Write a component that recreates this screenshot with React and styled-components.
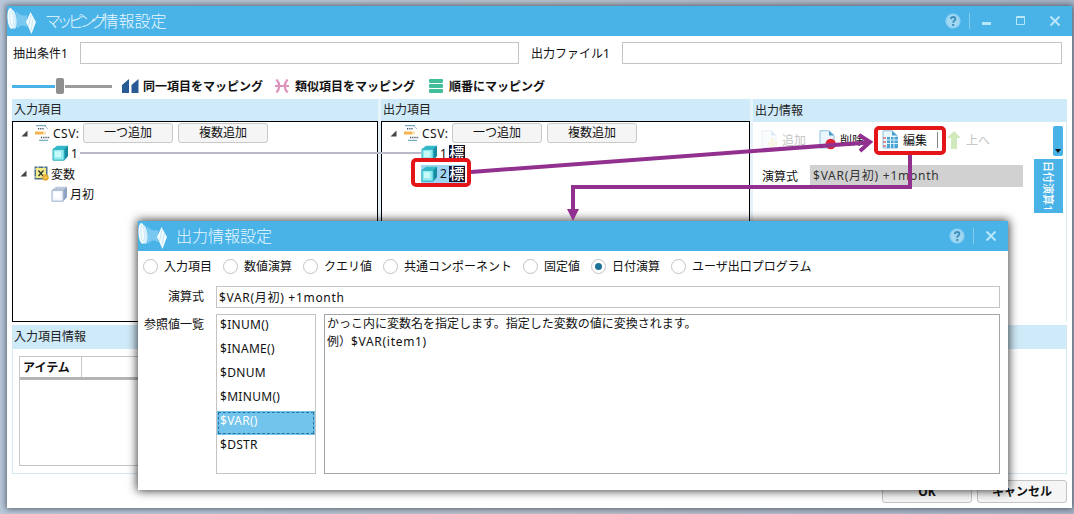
import { useState } from 'react';
import styled, { createGlobalStyle, css } from 'styled-components';

const GlobalStyle = createGlobalStyle`
  * {
    box-sizing: border-box;
  }

  body {
    margin: 0;
    overflow: hidden;
    font-family: 'Noto Sans', 'Noto Sans CJK JP', sans-serif;
    font-size: 12px;
    color: #111;
  }

  svg {
    display: block;
    flex: none;
  }
`;

const Desktop = styled.div`
  position: relative;
  width: 1074px;
  height: 514px;
  padding: 6px 2px 6px 7px;
  background: linear-gradient(90deg, #b9c9da, #bac2cc 50%, #a9b4c6);
`;

const Window = styled.div`
  display: flex;
  flex-direction: column;
  height: 502px;
  background: #fff;
  box-shadow: 0 0 6px 1px rgba(50, 60, 75, 0.75);
`;

const TitleBar = styled.header`
  display: flex;
  align-items: center;
  flex: none;
  height: 30px;
  color: #e8f8ff;
  background: #49b3e8;
`;

const Title = styled.h1`
  flex: 1;
  margin: 0 0 0 8px;
  font-size: 16px;
  font-weight: 300;
  line-height: 30px;
  white-space: nowrap;
`;

const WindowTools = styled.div`
  display: flex;
  align-items: center;
  gap: 8px;
  padding-right: 11px;
`;

const Text = styled.span`
  letter-spacing: ${({ $track }) => $track || 0}px;
  white-space: nowrap;
`;

const FieldRow = styled.div`
  display: grid;
  grid-template-columns: 67px 439px 103px 440px;
  align-items: center;
  height: 34px;
  padding-left: 6px;

  & > span:nth-child(3) {
    padding-left: 12px;
  }
`;

const Input = styled.input`
  width: 100%;
  height: 22px;
  padding: 0 2px;
  border: 1px solid #c4c4c4;
  background: #fff;
  font: inherit;
  letter-spacing: ${({ $track }) => $track || 0}px;
  color: inherit;
  outline: none;
`;

const ToolRow = styled.div`
  display: flex;
  align-items: center;
  height: 29px;
  padding: 3px 0 0 5px;
  font-weight: 700;
`;

const Slider = styled.div`
  display: flex;
  align-items: center;
  width: 100px;
  margin-right: 10px;
`;

const Track = styled.div`
  width: ${({ $width }) => $width}px;
  height: 3px;
  background: ${({ $on }) => ($on ? '#49b3e8' : '#9b9b9b')};
`;

const Thumb = styled.div`
  width: 8px;
  height: 16px;
  margin: 0 1px;
  border-radius: 2px;
  background: #8f8f8f;
`;

const MapButton = styled.div`
  display: flex;
  align-items: center;
  gap: ${({ $gap }) => $gap || 5}px;
  width: ${({ $width }) => $width}px;
  line-height: 17px;
`;

const Panels = styled.div`
  display: grid;
  grid-template-columns: 366px 369px 314px;
  gap: 3px;
  height: 223px;
  margin: 0 5px;
  background: #e6f3fa;
`;

const Panel = styled.section`
  display: flex;
  flex-direction: column;
  min-width: 0;
`;

const PanelTitle = styled.h2`
  flex: none;
  height: ${({ $height }) => $height || 22}px;
  margin: 0;
  padding-left: ${({ $left }) => $left ?? 2}px;
  font-size: 12px;
  font-weight: 400;
  line-height: ${({ $height }) => $height || 22}px;
  color: #222;
  background: #cfeaf8;
`;

const Tree = styled.div`
  flex: 1;
  padding-top: 1px;
  border: 1px solid #000;
  background: #fff;
`;

const TreeRow = styled.div`
  display: flex;
  align-items: center;
  height: 20.3px;
  padding-left: ${({ $indent }) => $indent}px;
`;

const NodeIcon = styled.div`
  margin-left: 7px;
`;

const TreeLabel = styled.span`
  width: ${({ $width }) => ($width ? `${$width}px` : 'auto')};
  margin-left: 2px;
  letter-spacing: ${({ $track }) => $track || 0}px;
  white-space: nowrap;
`;

const AddButton = styled.button`
  width: 90px;
  height: 20px;
  margin: 0 0 0 ${({ $left }) => $left}px;
  padding: 0;
  border: 1px solid #c9c9c9;
  border-radius: 3px;
  background: #f5f5f5;
  font: inherit;
  line-height: 16px;
  color: inherit;
`;

const Link = styled.div`
  flex: 1;
  height: 2px;
  margin-left: ${({ $left }) => $left || 0}px;
  background: #b9b9c9;
`;

const Selected = styled.div`
  display: flex;
  align-items: center;
  height: 18px;
  background: ${({ $on }) => ($on ? '#9fd5f3' : 'transparent')};
`;

const Badge = styled.span`
  width: 16px;
  height: 16px;
  margin-left: 2px;
  font-size: 15px;
  font-weight: 500;
  line-height: 15px;
  text-align: center;
  color: #fff;
  background: #12122a;
`;

const InfoBody = styled.div`
  display: grid;
  grid-template-columns: 1fr 33px;
  flex: 1;
  border-right: 1px solid #dcebf2;
  background: #fff;
`;

const InfoTools = styled.div`
  display: flex;
  align-items: center;
  height: 36px;
  padding-left: 8px;
`;

const InfoTool = styled.div`
  display: flex;
  align-items: center;
  gap: ${({ $gap }) => $gap || 4}px;
  width: ${({ $width }) => $width}px;
  padding-left: ${({ $left }) => $left || 0}px;
  white-space: nowrap;
  color: ${({ $off }) => ($off ? '#c6c6c6' : '#111')};
`;

const Separator = styled.i`
  width: 1px;
  height: ${({ $height }) => $height}px;
  margin-right: ${({ $right }) => $right || 0}px;
  background: ${({ $color }) => $color};
`;

const FormulaRow = styled.div`
  display: flex;
  align-items: center;
  height: 36px;
  padding-left: 9px;
`;

const FormulaValue = styled.div`
  width: 213px;
  height: 22px;
  margin-left: 12px;
  padding-left: 3px;
  letter-spacing: 0.75px;
  line-height: 21px;
  color: #333;
  background: #d1d1d1;
`;

const SideTabs = styled.div`
  display: flex;
  flex-direction: column;
  align-items: flex-end;
  gap: 3px;
  padding: 4px 3px 0 0;
`;

const TabScroll = styled.div`
  display: flex;
  align-items: flex-end;
  justify-content: center;
  width: 10px;
  height: 30px;
  padding-bottom: 3px;
  border-radius: 2px;
  background: #49b3e8;
`;

const SideTab = styled.div`
  width: 29px;
  height: 54px;
  padding-top: 2px;
  font-size: 11px;
  font-weight: 500;
  line-height: 29px;
  writing-mode: vertical-rl;
  text-orientation: sideways;
  white-space: nowrap;
  color: #fff;
  background: #49b3e8;
`;

const ItemInfo = styled.section`
  height: 149px;
  margin: 3px 5px 0;
  border: 1px solid #d4e8ef;
  border-top: 0;
`;

const ItemTable = styled.div`
  width: 700px;
  height: 110px;
  margin: 7px 0 0 6px;
  border: 1px solid #c6c6c6;
`;

const ItemHead = styled.div`
  display: flex;
  height: 23px;
  border-bottom: 3px solid #b4b4b4;
  font-weight: 700;
  line-height: 21px;

  & > span {
    width: 62px;
    padding-left: 3px;
    border-right: 1px solid #c6c6c6;
  }
`;

const Footer = styled.footer`
  display: flex;
  justify-content: flex-end;
  gap: 5px;
  padding: 6px 5px 0;
`;

const FooterButton = styled.button`
  width: 90px;
  height: 23px;
  padding: 0;
  border: 1px solid #c4c4c4;
  border-radius: 3px;
  background: #f5f5f5;
  font: inherit;
  font-weight: 700;
  line-height: 19px;
  color: #111;
`;

const Dialog = styled.div`
  position: absolute;
  left: 138px;
  top: 221px;
  width: 870px;
  height: 269px;
  background: #fff;
  box-shadow: 0 0 9px 1px rgba(0, 0, 0, 0.75);
`;

const RadioRow = styled.div`
  display: flex;
  align-items: center;
  height: 31px;
  padding-left: 5px;
`;

const RadioLabel = styled.label`
  display: flex;
  align-items: center;
  gap: 6px;
  width: ${({ $width }) => $width}px;
  white-space: nowrap;

  span {
    margin-top: -2px;
  }
`;

const Radio = styled.i`
  display: grid;
  place-items: center;
  width: 15px;
  height: 15px;
  border: 1px solid #c2c2c2;
  border-radius: 50%;

  ${({ $checked }) =>
    $checked &&
    css`
      &::after {
        content: '';
        width: 7px;
        height: 7px;
        border-radius: 50%;
        background: #1b7296;
      }
    `}
`;

const FormGrid = styled.div`
  display: grid;
  grid-template-columns: 66px 100px 676px;
  grid-template-rows: 22px 160px;
  gap: 6px 8px;
  padding: 4px 0 0 4px;
`;

const FormLabel = styled.span`
  padding: 2px 4px 0 0;
  line-height: 17px;
  text-align: right;
  white-space: nowrap;
`;

const FormulaField = styled.div`
  grid-column: 2 / 4;
`;

const ListBox = styled.ul`
  margin: 0;
  padding: 0;
  border: 1px solid #c4c4c4;
  list-style: none;
`;

const ListItem = styled.li`
  height: 24px;
  padding: 0 3px;
  letter-spacing: 0.3px;
  line-height: 20px;
  color: ${({ $selected }) => ($selected ? '#fff' : '#111')};
  background: ${({ $selected }) => ($selected ? '#72c4ec' : 'transparent')};
  outline: ${({ $selected }) => ($selected ? '1px dashed #2873a0' : 'none')};
  outline-offset: -2px;
`;

const Description = styled.div`
  padding: 0 2px;
  border: 1px solid #a5a5a5;
  line-height: 17.5px;
`;

const Overlay = styled.svg`
  position: absolute;
  left: 0;
  top: 0;
  pointer-events: none;
`;

const Logo = () => (
  <svg width="30" height="30" viewBox="0 0 30 30">
    <path d="M9 5 Q14 11 20 9 V21 Q14 17 10 23Z" fill="#79c8f0" />
    <ellipse cx="6.6" cy="13.5" rx="3" ry="9.5" fill="#cdebfa" transform="rotate(-6 6.6 13.5)" />
    <ellipse cx="4" cy="12.5" rx="3.5" ry="10.5" fill="#f4fcff" transform="rotate(-4 4 12.5)" />
    <ellipse cx="4.6" cy="12.5" rx="1.8" ry="8" fill="none" stroke="#b9e1f6" strokeWidth=".7" transform="rotate(-4 4.6 12.5)" />
    <path d="M23.5 6 L29 16 L24.5 28 L19 16Z" fill="#f0fbff" />
    <path d="M24 9 L21.5 20 M26.3 12 L24 24" stroke="#b4dff5" strokeWidth=".7" />
  </svg>
);

const HelpIcon = () => (
  <svg width="16" height="16" viewBox="0 0 16 16">
    <circle cx="8" cy="8" r="7.6" fill="#8fd0f2" />
    <circle cx="8" cy="8" r="6" fill="#a3d8f3" />
    <path d="M5.8 6.2 Q6 4 8.2 4 Q10.5 4.1 10.4 6 Q10.3 7.1 9 7.9 Q8.2 8.5 8.2 9.7" fill="none" stroke="#3f8fbb" strokeWidth="1.9" />
    <path d="M7.2 11h2v2h-2z" fill="#3f8fbb" />
  </svg>
);

const CloseIcon = () => (
  <svg width="12" height="12" viewBox="0 0 12 12">
    <path d="M1.5 1.5 L10.5 10.5 M10.5 1.5 L1.5 10.5" stroke="#b8e6fa" strokeWidth="2" />
  </svg>
);

const SizeIcons = () => (
  <svg width="63" height="16" viewBox="0 0 63 16">
    <path d="M4 9h9v3H4z" fill="#b8e6fa" />
    <path d="M38.5 3.5h8v8h-8z M38 4.5h9" fill="none" stroke="#b8e6fa" />
  </svg>
);

const SameIcon = () => (
  <svg width="17" height="14" viewBox="0 0 17 14">
    <path d="M0 14V6L7 0V14Z M9.5 14V6L16.5 0V14Z" fill="#285b93" />
  </svg>
);

const SimilarIcon = () => (
  <svg width="14" height="14" viewBox="0 0 14 14">
    <path d="M1.5 .5 Q7 7 1.5 13.5 M12.5 .5 Q7 7 12.5 13.5 M0 7H14" fill="none" stroke="#dd93bd" strokeWidth="2.2" />
  </svg>
);

const OrderIcon = () => (
  <svg width="14" height="14" viewBox="0 0 14 14">
    <g fill="#43be9b">
      <rect width="14" height="4" rx="1" />
      <rect y="5" width="14" height="4" rx="1" />
      <rect y="10" width="14" height="4" rx="1" />
    </g>
  </svg>
);

const Expander = () => (
  <svg width="7" height="7" viewBox="0 0 7 7">
    <path d="M6.5 .5V6.5H.5Z" fill="#444" />
  </svg>
);

const CsvIcon = () => (
  <svg width="16" height="16" viewBox="0 0 16 16">
    <path d="M1 .7H11 M4 15.3H13" stroke="#5797b6" />
    <path d="M3 3.8H9 M6 12.5H15" stroke="#3a4f5c" strokeWidth="1.5" strokeDasharray="1.2 1" />
    <path d="M0 6.5h8v3H0z" fill="#f2b551" />
    <path d="M8 6.5h3v3H8z" fill="#f9dfae" />
    <path d="M10 1l3 3" stroke="#9bbfd0" />
  </svg>
);

const Cube = ({ pale }) => (
  <svg width="17" height="16" viewBox="0 0 17 16">
    <path d="M1 4L5 .7H16V11L12.5 15H1Z" fill={pale ? '#bcc9df' : '#36b9c8'} />
    <path d="M12 4.5L16 .7V11L12.5 15Z" fill={pale ? '#8fa3c4' : '#168ba2'} />
    <path d="M1 4.2h11.2v11H1z" fill={pale ? '#f4f7fd' : '#8febee'} stroke={pale ? '#9baeca' : '#26a9bc'} />
    <path d="M3 6.2h6v6H3z" fill={pale ? '#fff' : '#c9fafa'} />
  </svg>
);

const VarIcon = () => (
  <svg width="15" height="15" viewBox="0 0 15 15">
    <path d="M.5 .5h13v13H.5z" fill="#4e7184" />
    <path d="M2 2h10v10H2z" fill="#f4eb88" />
    <path d="M4 0v2M10 0v2M0 3h2M0 11h2" stroke="#d4e8ef" />
    <path d="M4.5 4.5L9 10M9.5 4.5L4.5 10" stroke="#283c35" strokeWidth="1.3" />
    <circle cx="11.5" cy="11.5" r="3.2" fill="#e3ad2d" />
    <circle cx="11.5" cy="11.5" r="1" fill="#fbe28c" />
  </svg>
);

const PageIcon = ({ kind }) => (
  <svg width="17" height="20" viewBox="0 0 17 20" opacity={kind === 'add' ? 0.2 : 1}>
    <path d="M1 .8H10L15 5.5V18H1Z" fill="#eaf6fd" stroke="#8dbfdb" />
    <path d="M10 .8V5.5H15Z" fill="#4a9ccb" />
    {kind === 'add' && <path d="M10 8h3v4h4v3h-4v4h-3v-4H7v-3h3z" fill="#e8d97c" />}
    {kind === 'delete' && <circle cx="11.7" cy="14" r="5.2" fill="#dc2636" />}
    {kind === 'edit' && (
      <>
        <path d="M5 7h11v11H5z" fill="#4ba3d3" />
        <path d="M5 10h11M5 13.5h11M8.5 7v11M12 7v11" stroke="#d8f1fc" />
        <path d="M1 8h3M1 12h3M1 16h3" stroke="#d3707b" strokeWidth="1.5" />
      </>
    )}
  </svg>
);

const UpIcon = () => (
  <svg width="14" height="18" viewBox="0 0 14 18">
    <path d="M7 0L14 7H10V18H4V7H0Z" fill="#d2e9bd" />
  </svg>
);

const CsvRow = () => (
  <TreeRow $indent={8}>
    <Expander />
    <NodeIcon>
      <CsvIcon />
    </NodeIcon>
    <TreeLabel $track={0.5} $width={28}>
      CSV:
    </TreeLabel>
    <AddButton $left={2}>一つ追加</AddButton>
    <AddButton $left={5}>複数追加</AddButton>
  </TreeRow>
);

const RADIOS = [
  { label: '入力項目', width: 80 },
  { label: '数値演算', width: 80 },
  { label: 'クエリ値', width: 80 },
  { label: '共通コンポーネント', width: 140 },
  { label: '固定値', width: 68 },
  { label: '日付演算', width: 80 },
  { label: 'ユーザ出口プログラム', width: 160 },
];

const FUNCTIONS = ['$INUM()', '$INAME()', '$DNUM', '$MINUM()', '$VAR()', '$DSTR'];

const OutputDialog = () => {
  const [mode, setMode] = useState('日付演算');
  const [selected, setSelected] = useState('$VAR()');

  return (
    <Dialog>
      <TitleBar>
        <Logo />
        <Title>出力情報設定</Title>
        <WindowTools>
          <HelpIcon />
          <Separator $height={16} $right={3} $color="#85ccef" />
          <CloseIcon />
        </WindowTools>
      </TitleBar>
      <RadioRow>
        {RADIOS.map(({ label, width }) => (
          <RadioLabel key={label} $width={width} onClick={() => setMode(label)}>
            <Radio $checked={mode === label} />
            <Text>{label}</Text>
          </RadioLabel>
        ))}
      </RadioRow>
      <FormGrid>
        <FormLabel>演算式</FormLabel>
        <FormulaField>
          <Input $track={0.7} defaultValue="$VAR(月初) +1month" />
        </FormulaField>
        <FormLabel>参照値一覧</FormLabel>
        <ListBox>
          {FUNCTIONS.map((name) => (
            <ListItem key={name} $selected={name === selected} onClick={() => setSelected(name)}>
              {name}
            </ListItem>
          ))}
        </ListBox>
        <Description>
          <Text>かっこ内に変数名を指定します。指定した変数の値に変換されます。</Text>
          <br />
          <Text>例）</Text>
          <Text $track={0.7}>$VAR(item1)</Text>
        </Description>
      </FormGrid>
    </Dialog>
  );
};

const App = () => (
  <Desktop>
    <GlobalStyle />
    <Window>
      <TitleBar>
        <Logo />
        <Title>
          <Text $track={-4.5}>マッピング</Text>情報設定
        </Title>
        <WindowTools>
          <HelpIcon />
          <Separator $height={16} $color="#85ccef" />
          <SizeIcons />
          <CloseIcon />
        </WindowTools>
      </TitleBar>

      <FieldRow>
        <Text>抽出条件1</Text>
        <Input />
        <Text>出力ファイル1</Text>
        <Input />
      </FieldRow>

      <ToolRow>
        <Slider>
          <Track $on $width={43} />
          <Thumb />
          <Track $width={47} />
        </Slider>
        <MapButton $gap={4} $width={153}>
          <SameIcon />
          <Text>同一項目をマッピング</Text>
        </MapButton>
        <MapButton $gap={6} $width={154}>
          <SimilarIcon />
          <Text>類似項目をマッピング</Text>
        </MapButton>
        <MapButton $gap={6} $width={130}>
          <OrderIcon />
          <Text>順番にマッピング</Text>
        </MapButton>
      </ToolRow>

      <Panels>
        <Panel>
          <PanelTitle>入力項目</PanelTitle>
          <Tree>
            <CsvRow />
            <TreeRow $indent={39}>
              <Cube />
              <TreeLabel>1</TreeLabel>
              <Link $left={2} />
            </TreeRow>
            <TreeRow $indent={7}>
              <Expander />
              <NodeIcon>
                <VarIcon />
              </NodeIcon>
              <TreeLabel>変数</TreeLabel>
            </TreeRow>
            <TreeRow $indent={38}>
              <Cube pale />
              <TreeLabel>月初</TreeLabel>
            </TreeRow>
          </Tree>
        </Panel>
        <Panel>
          <PanelTitle>出力項目</PanelTitle>
          <Tree>
            <CsvRow />
            <TreeRow $indent={39}>
              <Selected>
                <Cube />
                <TreeLabel>1</TreeLabel>
                <Badge>標</Badge>
              </Selected>
            </TreeRow>
            <TreeRow $indent={39}>
              <Selected $on>
                <Cube />
                <TreeLabel>2</TreeLabel>
                <Badge>標</Badge>
              </Selected>
            </TreeRow>
          </Tree>
        </Panel>
        <Panel>
          <PanelTitle $height={23}>出力情報</PanelTitle>
          <InfoBody>
            <div>
              <InfoTools>
                <InfoTool $off $width={58}>
                  <PageIcon kind="add" />
                  追加
                </InfoTool>
                <InfoTool $width={63}>
                  <PageIcon kind="delete" />
                  削除
                </InfoTool>
                <InfoTool $width={55}>
                  <PageIcon kind="edit" />
                  編集
                </InfoTool>
                <Separator $height={16} $color="#888" />
                <InfoTool $off $gap={5} $left={9} $width={60}>
                  <UpIcon />
                  上へ
                </InfoTool>
              </InfoTools>
              <FormulaRow>
                演算式
                <FormulaValue>$VAR(月初) +1month</FormulaValue>
              </FormulaRow>
            </div>
            <SideTabs>
              <TabScroll>
                <svg width="6" height="4" viewBox="0 0 6 4">
                  <path d="M0 0H6L3 4Z" fill="#111" />
                </svg>
              </TabScroll>
              <SideTab>日付演算1</SideTab>
            </SideTabs>
          </InfoBody>
        </Panel>
      </Panels>

      <ItemInfo>
        <PanelTitle $height={24} $left={1}>
          入力項目情報
        </PanelTitle>
        <ItemTable>
          <ItemHead>
            <span>アイテム</span>
          </ItemHead>
        </ItemTable>
      </ItemInfo>

      <Footer>
        <FooterButton>OK</FooterButton>
        <FooterButton>キャンセル</FooterButton>
      </Footer>
    </Window>

    <OutputDialog />

    {/* callout frames and the arrows between them */}
    <Overlay width="1074" height="514" viewBox="0 0 1074 514">
      <path d="M377 153H421" stroke="#b9b9c9" strokeWidth="2" />
      <g fill="none" stroke="#92308f" strokeWidth="4">
        <path d="M471 172L868 142.5" />
        <path d="M859 135L870 142L860 151" />
        <path d="M910 154V187H573V211" />
      </g>
      <path d="M567 209H579L573 221Z" fill="#92308f" />
      <g fill="none" stroke="#e31519" strokeWidth="4">
        <rect x="413" y="160" width="56" height="25" rx="3" />
        <rect x="876" y="128" width="68" height="25" rx="3" />
      </g>
    </Overlay>
  </Desktop>
);

export default App;
